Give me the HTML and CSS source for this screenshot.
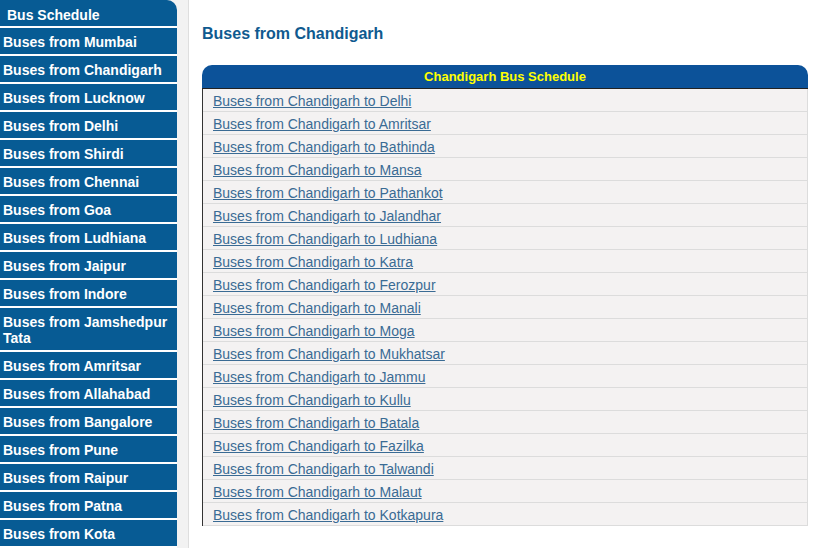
FILE: index.html
```html
<!DOCTYPE html>
<html>
<head>
<meta charset="utf-8">
<link rel="stylesheet" href="styles.css">
</head>
<body>
<div class="page">
  <aside class="sidebar">
    <ul class="menu">
      <li class="menu-title">Bus Schedule</li>
      <li><a href="#">Buses from Mumbai</a></li>
      <li><a href="#">Buses from Chandigarh</a></li>
      <li><a href="#">Buses from Lucknow</a></li>
      <li><a href="#">Buses from Delhi</a></li>
      <li><a href="#">Buses from Shirdi</a></li>
      <li><a href="#">Buses from Chennai</a></li>
      <li><a href="#">Buses from Goa</a></li>
      <li><a href="#">Buses from Ludhiana</a></li>
      <li><a href="#">Buses from Jaipur</a></li>
      <li><a href="#">Buses from Indore</a></li>
      <li><a href="#">Buses from Jamshedpur Tata</a></li>
      <li><a href="#">Buses from Amritsar</a></li>
      <li><a href="#">Buses from Allahabad</a></li>
      <li><a href="#">Buses from Bangalore</a></li>
      <li><a href="#">Buses from Pune</a></li>
      <li><a href="#">Buses from Raipur</a></li>
      <li><a href="#">Buses from Patna</a></li>
      <li><a href="#">Buses from Kota</a></li>
    </ul>
  </aside>
  <main class="content">
    <h1 class="title">Buses from Chandigarh</h1>
    <div class="schedule">
      <div class="schedule-head">Chandigarh Bus Schedule</div>
      <ul class="routes">
        <li><a href="#">Buses from Chandigarh to Delhi</a></li>
        <li><a href="#">Buses from Chandigarh to Amritsar</a></li>
        <li><a href="#">Buses from Chandigarh to Bathinda</a></li>
        <li><a href="#">Buses from Chandigarh to Mansa</a></li>
        <li><a href="#">Buses from Chandigarh to Pathankot</a></li>
        <li><a href="#">Buses from Chandigarh to Jalandhar</a></li>
        <li><a href="#">Buses from Chandigarh to Ludhiana</a></li>
        <li><a href="#">Buses from Chandigarh to Katra</a></li>
        <li><a href="#">Buses from Chandigarh to Ferozpur</a></li>
        <li><a href="#">Buses from Chandigarh to Manali</a></li>
        <li><a href="#">Buses from Chandigarh to Moga</a></li>
        <li><a href="#">Buses from Chandigarh to Mukhatsar</a></li>
        <li><a href="#">Buses from Chandigarh to Jammu</a></li>
        <li><a href="#">Buses from Chandigarh to Kullu</a></li>
        <li><a href="#">Buses from Chandigarh to Batala</a></li>
        <li><a href="#">Buses from Chandigarh to Fazilka</a></li>
        <li><a href="#">Buses from Chandigarh to Talwandi</a></li>
        <li><a href="#">Buses from Chandigarh to Malaut</a></li>
        <li><a href="#">Buses from Chandigarh to Kotkapura</a></li>
      </ul>
    </div>
  </main>
</div>
</body>
</html>
```

FILE: styles.css
```css
html, body {
  margin: 0;
  padding: 0;
  background: #fff;
  font-family: "Liberation Sans", Arial, sans-serif;
  overflow: hidden;
  height: 548px;
}
.page {
  display: flex;
  align-items: flex-start;
  height: 548px;
}
.sidebar {
  width: 177px;
  padding-right: 11px;
  background: #f2f2f2;
  border-right: 1px solid #dedede;
  height: 548px;
  flex-shrink: 0;
  overflow: hidden;
}
.menu {
  list-style: none;
  margin: 0;
  padding: 0;
  width: 177px;
}
.menu li {
  background: #075b94;
  border-bottom: 2px solid #fff;
  padding: 6px 3px 4px;
  line-height: 16px;
  font-size: 14px;
  font-weight: bold;
}
.menu li.menu-title {
  padding: 7px 7px 3px;
  border-top-right-radius: 10px;
  color: #fff;
}
.menu a {
  color: #fff;
  text-decoration: none;
}
.content {
  flex: 1;
  padding: 0 7px 0 13px;
}
.title {
  margin: 25px 0 0;
  font-size: 16px;
  line-height: 18px;
  font-weight: bold;
  color: #0f5a8f;
}
.schedule {
  margin-top: 22px;
}
.schedule-head {
  background: #0c5299;
  color: #ffff00;
  font-size: 13px;
  font-weight: bold;
  text-align: center;
  height: 23px;
  line-height: 23px;
  border-radius: 10px 10px 0 0;
  border-bottom: 1px solid #222;
}
.routes {
  list-style: none;
  margin: 0;
  padding: 0;
  border-left: 1px solid #333;
  border-right: 1px solid #dcdcdc;
}
.routes li {
  background: #f4f2f2;
  border-bottom: 1px solid #dcdcdc;
  height: 21px;
  padding-top: 1px;
  line-height: 23px;
  padding-left: 10px;
  font-size: 14px;
}
.routes a {
  color: #3a6b94;
  text-decoration: underline;
}
```
